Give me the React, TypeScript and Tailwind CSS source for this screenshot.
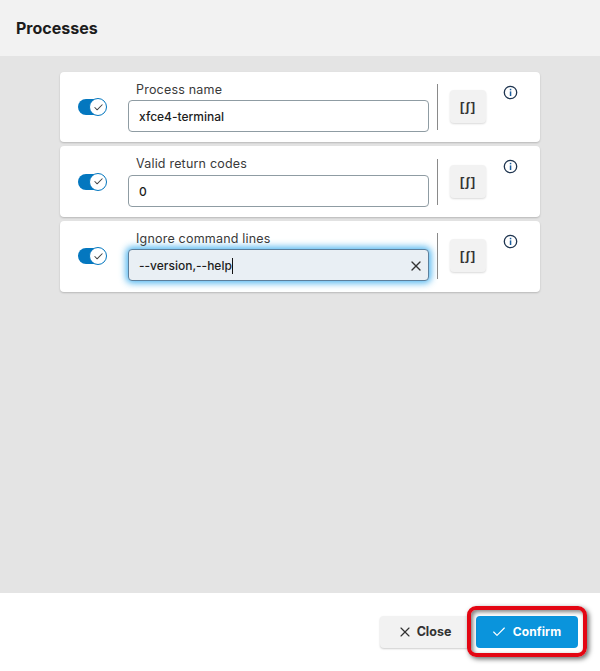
import { Check, X } from 'lucide-react';

const FONT = "font-['Inter',sans-serif]";

function Toggle() {
    return (
        <div className="w-7 h-4 rounded-full bg-[#0477bf] relative shrink-0 ml-[18px]">
            <div className="absolute -right-px -top-px w-[18px] h-[18px] rounded-full bg-white border-[1.5px] border-[#0477bf] flex items-center justify-center">
                <Check className="w-[11px] h-[11px] text-[#444]" strokeWidth={2.25} />
            </div>
        </div>
    );
}

function InfoIcon() {
    return (
        <svg width="15" height="15" viewBox="0 0 15 15" fill="none" className="block">
            <circle cx="7.5" cy="7.5" r="6.2" stroke="#1f3550" strokeWidth="1.3" />
            <rect x="6.8" y="6.4" width="1.5" height="4.6" fill="#1b5f9e" />
            <rect x="6.8" y="3.8" width="1.5" height="1.5" fill="#1b5f9e" />
        </svg>
    );
}

type RowProps = {
    label: string;
    value: string;
    focused?: boolean;
    height: string;
    labelHeight: string;
    toggleClass?: string;
    dividerTop: string;
    buttonTop: string;
};

function Row({ label, value, focused, height, labelHeight, toggleClass, dividerTop, buttonTop }: RowProps) {
    return (
        <div className={`${height} rounded-[4px] bg-white shadow-[0_1px_2px_rgba(0,0,0,0.2)] flex items-start`}>
            <div className={`w-[68px] shrink-0 h-full flex items-center ${toggleClass ?? ''}`}>
                <Toggle />
            </div>
            <div className="w-[301px] shrink-0 pt-[11px]">
                <div className={`${labelHeight} pl-2 text-[12.5px] leading-[13px] tracking-[0.2px] text-[#3a3a3a]`}>{label}</div>
                <div
                    className={
                        focused
                            ? 'h-8 rounded-[4px] border border-[#5b7f9c] bg-[#e9eff4] shadow-[0_0_7px_2px_rgba(30,160,235,0.8)] flex items-center justify-between pl-[10px] pr-1 pt-px'
                            : 'h-8 rounded-[4px] border border-[#8f9ca3] bg-white flex items-center pl-[10px] pt-px'
                    }
                >
                    <span className="flex items-center text-[12px] font-medium text-[#1d1d1d]">
                        {value}
                        {focused && <span className="w-px h-4 bg-[#111]" />}
                    </span>
                    {focused && <X className="w-4 h-4 text-[#333]" strokeWidth={2} />}
                </div>
            </div>
            <div className={`w-px h-[46px] bg-[#8a8a8a] ml-2 shrink-0 ${dividerTop}`} />
            <button className={`w-9 h-[33px] ml-3 shrink-0 rounded-[4px] bg-[#f2f2f2] shadow-[0_1px_2px_rgba(0,0,0,0.15)] text-[13px] font-semibold tracking-[1px] text-[#333] font-['Liberation_Sans',sans-serif] ${buttonTop}`}>
                [ʃ]
            </button>
            <div className="ml-[17px] mt-[13px]">
                <InfoIcon />
            </div>
        </div>
    );
}

export default function App() {
    return (
        <div className={`${FONT} w-[600px] h-[671px] flex flex-col bg-white overflow-hidden`}>
            <header className="h-14 shrink-0 bg-[#f2f2f2] flex items-center pl-4">
                <h1 className="text-base font-bold text-[#1c1c1c]">Processes</h1>
            </header>

            <main className="flex-1 bg-[#e4e4e4] pt-4 px-[60px] flex flex-col gap-1">
                <Row label="Process name" value="xfce4-terminal" height="h-[70px]" labelHeight="h-[17px]" dividerTop="mt-3" buttonTop="mt-[18px]" />
                <Row label="Valid return codes" value="0" height="h-[71px]" labelHeight="h-[18px]" dividerTop="mt-[13px]" buttonTop="mt-[19px]" />
                <Row
                    label="Ignore command lines"
                    value="--version,--help"
                    focused
                    height="h-[71px]"
                    labelHeight="h-[17px]"
                    toggleClass="pb-px"
                    dividerTop="mt-3"
                    buttonTop="mt-[18px]"
                />
            </main>

            <footer className="h-[78px] shrink-0 bg-white flex items-start justify-end gap-[5px] pt-[23px] pr-[22px]">
                <button className="w-[91px] h-8 rounded-[4px] bg-[#f2f2f2] shadow-[0_1px_2px_rgba(0,0,0,0.2)] flex items-center justify-center gap-1 pr-[3px] text-[12.5px] font-bold text-[#333]">
                    <X className="w-4 h-4" strokeWidth={1.75} />
                    Close
                </button>
                <div className="relative">
                    <button className="w-[102px] h-8 rounded-[4px] bg-[#0a94dc] flex items-center justify-center gap-1.5 pr-[2px] text-[12px] font-bold text-white tracking-[0.1px]">
                        <Check className="w-4 h-4" strokeWidth={1.75} />
                        Confirm
                    </button>
                    <div className="absolute -left-[9px] -top-[10px] w-[120px] h-[51px] rounded-[9px] border-4 border-[#e30613] shadow-[2px_2px_5px_rgba(0,0,0,0.6),inset_2px_2px_4px_rgba(0,0,0,0.5)]" />
                </div>
            </footer>
        </div>
    );
}
